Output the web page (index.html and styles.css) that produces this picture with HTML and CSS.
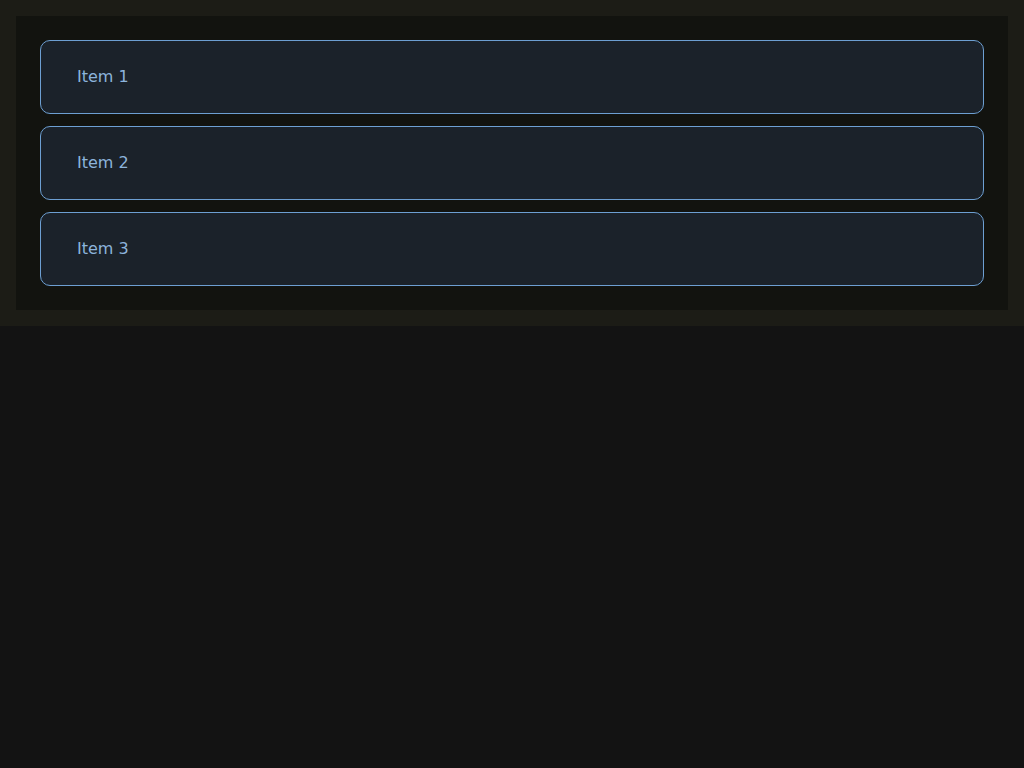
FILE: index.html
```html
<!DOCTYPE html>
<html>
<head>
<meta charset="utf-8">
<link rel="stylesheet" href="styles.css">
</head>
<body>
<div class="band">
  <div class="panel">
    <div class="item">Item 1</div>
    <div class="item">Item 2</div>
    <div class="item">Item 3</div>
  </div>
</div>
</body>
</html>
```
FILE: styles.css
```css
html, body {
  margin: 0;
  background: #131313;
}
.band {
  background: #1c1c16;
  padding: 16px;
}
.panel {
  background: #12130f;
  padding: 24px;
  display: flex;
  flex-direction: column;
  gap: 12px;
}
.item {
  box-sizing: border-box;
  height: 74px;
  border: 1px solid #6d9fd2;
  border-radius: 10px;
  background: #1b222a;
  padding: 0 36px 2px;
  display: flex;
  align-items: center;
  color: #8db4dc;
  font-family: "DejaVu Sans", sans-serif;
  font-size: 16px;
}
```
